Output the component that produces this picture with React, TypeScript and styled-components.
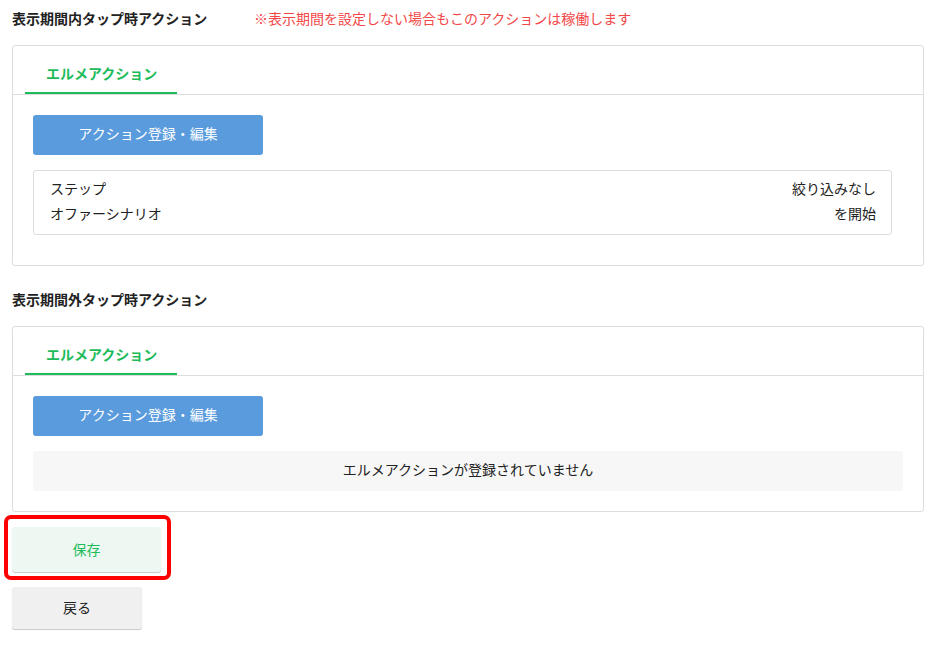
import styled, { createGlobalStyle } from 'styled-components';

const GlobalStyle = createGlobalStyle`
  body {
    margin: 0;
    background: #ffffff;
    font-family: "Noto Sans CJK JP", "Noto Sans", sans-serif;
    color: #222222;
    font-size: 14px;
  }
`;

const Page = styled.div`
  padding: 8px 12px 16px 12px;
`;

const SectionHeader = styled.div`
  display: flex;
  align-items: center;
  height: 20px;
  margin-bottom: 17px;
`;

const SectionTitle = styled.h3`
  margin: 0;
  width: 242px;
  font-size: 14px;
  font-weight: 700;
  color: #222222;
`;

const Note = styled.span`
  font-size: 14px;
  color: #f24848;
`;

const Card = styled.section<{ $bottom: number }>`
  border: 1px solid #dddddd;
  border-radius: 3px;
  margin-bottom: ${(p) => p.$bottom}px;
`;

const TabBar = styled.div`
  display: flex;
  padding-left: 12px;
  border-bottom: 1px solid #dddddd;
`;

const Tab = styled.div`
  width: 152px;
  height: 48px;
  box-sizing: border-box;
  padding: 8px 0 0 21px;
  display: flex;
  align-items: center;
  font-size: 14px;
  font-weight: 700;
  color: #1dbb5a;
  border-bottom: 2px solid #1dbb5a;
`;

const CardBody = styled.div<{ $bottom: number }>`
  padding: 20px 20px ${(p) => p.$bottom}px 20px;
`;

const ActionButton = styled.button`
  display: block;
  width: 230px;
  height: 40px;
  padding: 0 0 4px 0;
  border: none;
  border-radius: 3px;
  background: #5a9bdd;
  color: #ffffff;
  font-family: inherit;
  font-size: 14px;
  cursor: pointer;
  margin-bottom: 15px;
`;

const InfoBox = styled.div`
  margin-right: 11px;
  border: 1px solid #dddddd;
  border-radius: 3px;
  padding: 5px 15px 8px 16px;
`;

const InfoRow = styled.div`
  display: flex;
  justify-content: space-between;
  line-height: 25px;
  font-size: 14px;
  color: #222222;
`;

const EmptyBox = styled.div`
  height: 40px;
  box-sizing: border-box;
  padding-bottom: 4px;
  border-radius: 3px;
  background: #f7f7f7;
  display: flex;
  align-items: center;
  justify-content: center;
  font-size: 14px;
  color: #222222;
`;

const Footer = styled.div`
  display: flex;
  flex-direction: column;
  align-items: flex-start;
  gap: 15px;
`;

const BaseButton = styled.button`
  border: none;
  border-radius: 3px;
  padding: 0 0 2px 0;
  font-family: inherit;
  font-size: 14px;
  cursor: pointer;
  box-shadow: 0 1px 1px rgba(0, 0, 0, 0.22);
`;

const SaveButton = styled(BaseButton)`
  position: relative;
  width: 149px;
  height: 45px;
  background: #eef8f2;
  color: #1dbb5a;

  &::after {
    content: '';
    position: absolute;
    top: -12px;
    left: -8px;
    right: -10px;
    bottom: -8px;
    border: 4px solid #ff0000;
    border-radius: 7px;
    pointer-events: none;
  }
`;

const BackButton = styled(BaseButton)`
  width: 130px;
  height: 42px;
  background: #f0f0f0;
  color: #222222;
`;

function ActionCard({ children, bottom, gap }: { children: React.ReactNode; bottom: number; gap: number }) {
  return (
    <Card $bottom={gap}>
      <TabBar>
        <Tab>エルメアクション</Tab>
      </TabBar>
      <CardBody $bottom={bottom}>
        <ActionButton>アクション登録・編集</ActionButton>
        {children}
      </CardBody>
    </Card>
  );
}

export default function App() {
  return (
    <>
      <GlobalStyle />
      <Page>
        <SectionHeader>
          <SectionTitle>表示期間内タップ時アクション</SectionTitle>
          <Note>※表示期間を設定しない場合もこのアクションは稼働します</Note>
        </SectionHeader>
        <ActionCard bottom={30} gap={23}>
          <InfoBox>
            <InfoRow>
              <span>ステップ</span>
              <span>絞り込みなし</span>
            </InfoRow>
            <InfoRow>
              <span>オファーシナリオ</span>
              <span>を開始</span>
            </InfoRow>
          </InfoBox>
        </ActionCard>

        <SectionHeader>
          <SectionTitle>表示期間外タップ時アクション</SectionTitle>
        </SectionHeader>
        <ActionCard bottom={20} gap={15}>
          <EmptyBox>エルメアクションが登録されていません</EmptyBox>
        </ActionCard>

        <Footer>
          <SaveButton>保存</SaveButton>
          <BackButton>戻る</BackButton>
        </Footer>
      </Page>
    </>
  );
}
